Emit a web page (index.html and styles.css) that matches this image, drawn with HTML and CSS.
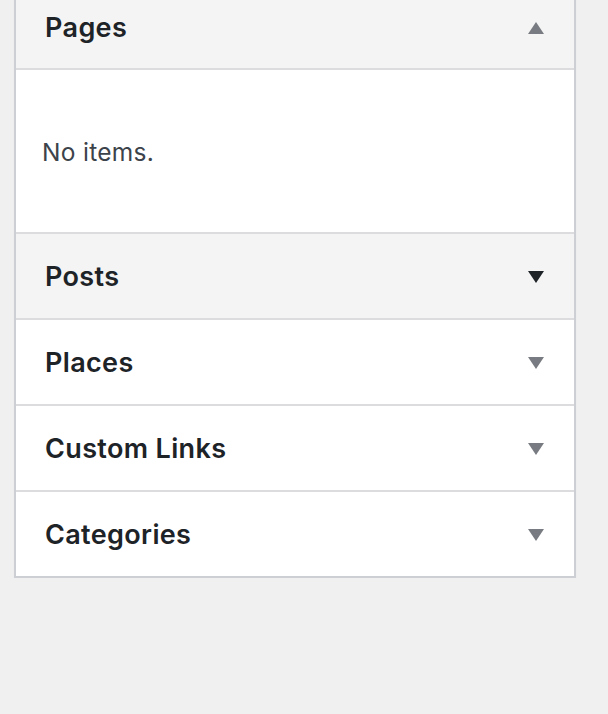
FILE: index.html
```html
<!doctype html>
<html>
<head>
<meta charset="utf-8">
<title>Add menu items</title>
<link rel="stylesheet" href="styles.css">
</head>
<body>
<div class="menu-boxes">
	<div class="box open">
		<div class="box-title">
			<h3>Pages</h3>
			<svg class="arrow" width="16" height="12" viewBox="0 0 16 12"><polygon points="0,12 8,0 16,12"/></svg>
		</div>
		<div class="box-content">
			<p>No items.</p>
		</div>
	</div>
	<div class="box hover">
		<div class="box-title">
			<h3>Posts</h3>
			<svg class="arrow" width="16" height="12" viewBox="0 0 16 12"><polygon points="0,0 16,0 8,12"/></svg>
		</div>
	</div>
	<div class="box">
		<div class="box-title">
			<h3>Places</h3>
			<svg class="arrow" width="16" height="12" viewBox="0 0 16 12"><polygon points="0,0 16,0 8,12"/></svg>
		</div>
	</div>
	<div class="box">
		<div class="box-title">
			<h3>Custom Links</h3>
			<svg class="arrow" width="16" height="12" viewBox="0 0 16 12"><polygon points="0,0 16,0 8,12"/></svg>
		</div>
	</div>
	<div class="box">
		<div class="box-title">
			<h3>Categories</h3>
			<svg class="arrow" width="16" height="12" viewBox="0 0 16 12"><polygon points="0,0 16,0 8,12"/></svg>
		</div>
	</div>
</div>
</body>
</html>
```
FILE: styles.css
```css
*{ margin: 0; padding: 0; box-sizing: border-box;}
body{ background: #f0f0f1; font-family: Inter, "Noto Sans", sans-serif; overflow: hidden;}
.menu-boxes{ width: 562px; margin: -14px 0 0 14px; background: #fff; border: 2px solid #ccd0d4; border-top: 0; box-shadow: 0 1px 1px rgba(0,0,0,.06);}
.box{ border-bottom: 2px solid #dcdcde;}
.box:last-child{ border-bottom: 0;}
.box-title{ height: 84px; display: flex; align-items: center; justify-content: space-between; padding: 0 30px 0 29px;}
.box-title h3{ font-size: 27px; font-weight: 600; color: #1d2327; letter-spacing: 0.35px;}
.box-title .arrow{ fill: #787c82; margin-top: 1px;}
.open .box-title,
.hover .box-title{ background: #f4f4f4;}
.hover .box-title .arrow{ fill: #1d2327;}
.open .box-title{ border-bottom: 2px solid #dcdcde;}
.box-content{ height: 162px; display: flex; align-items: center; padding: 0 26px; padding-top: 2px;}
.box-content p{ font-size: 24.5px; color: #3c434a; letter-spacing: 0.3px;}
```
